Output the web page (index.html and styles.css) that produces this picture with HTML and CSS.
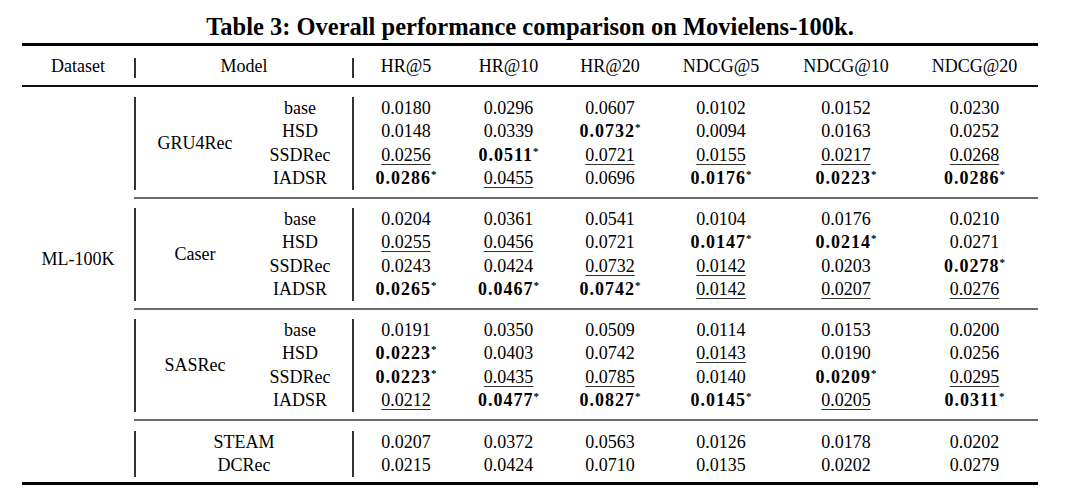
FILE: index.html
```html
<!DOCTYPE html>
<html lang="en">
<head>
<meta charset="utf-8">
<title>Table 3</title>
<link rel="stylesheet" href="styles.css">
</head>
<body>
<div class="page">
  <div class="title">Table 3: Overall performance comparison on Movielens-100k.</div>
  <div class="head">
    <div class="h">Dataset</div>
    <div class="h bar">Model</div>
    <div class="h bar">HR@5</div>
    <div class="h">HR@10</div>
    <div class="h">HR@20</div>
    <div class="h">NDCG@5</div>
    <div class="h">NDCG@10</div>
    <div class="h">NDCG@20</div>
  </div>
  <div class="body">
    <div class="dataset">ML-100K</div>

    <div class="group">
      <div class="name">GRU4Rec</div>
      <div class="var">base</div>
      <div class="c n1">0.0180</div><div class="c">0.0296</div><div class="c">0.0607</div><div class="c">0.0102</div><div class="c">0.0152</div><div class="c">0.0230</div>
      <div class="var">HSD</div>
      <div class="c n1">0.0148</div><div class="c">0.0339</div><div class="c"><b>0.0732</b><sup>*</sup></div><div class="c">0.0094</div><div class="c">0.0163</div><div class="c">0.0252</div>
      <div class="var">SSDRec</div>
      <div class="c n1"><u>0.0256</u></div><div class="c"><b>0.0511</b><sup>*</sup></div><div class="c"><u>0.0721</u></div><div class="c"><u>0.0155</u></div><div class="c"><u>0.0217</u></div><div class="c"><u>0.0268</u></div>
      <div class="var">IADSR</div>
      <div class="c n1"><b>0.0286</b><sup>*</sup></div><div class="c"><u>0.0455</u></div><div class="c">0.0696</div><div class="c"><b>0.0176</b><sup>*</sup></div><div class="c"><b>0.0223</b><sup>*</sup></div><div class="c"><b>0.0286</b><sup>*</sup></div>
    </div>

    <div class="group">
      <div class="name">Caser</div>
      <div class="var">base</div>
      <div class="c n1">0.0204</div><div class="c">0.0361</div><div class="c">0.0541</div><div class="c">0.0104</div><div class="c">0.0176</div><div class="c">0.0210</div>
      <div class="var">HSD</div>
      <div class="c n1"><u>0.0255</u></div><div class="c"><u>0.0456</u></div><div class="c">0.0721</div><div class="c"><b>0.0147</b><sup>*</sup></div><div class="c"><b>0.0214</b><sup>*</sup></div><div class="c">0.0271</div>
      <div class="var">SSDRec</div>
      <div class="c n1">0.0243</div><div class="c">0.0424</div><div class="c"><u>0.0732</u></div><div class="c"><u>0.0142</u></div><div class="c">0.0203</div><div class="c"><b>0.0278</b><sup>*</sup></div>
      <div class="var">IADSR</div>
      <div class="c n1"><b>0.0265</b><sup>*</sup></div><div class="c"><b>0.0467</b><sup>*</sup></div><div class="c"><b>0.0742</b><sup>*</sup></div><div class="c"><u>0.0142</u></div><div class="c"><u>0.0207</u></div><div class="c"><u>0.0276</u></div>
    </div>

    <div class="group">
      <div class="name">SASRec</div>
      <div class="var">base</div>
      <div class="c n1">0.0191</div><div class="c">0.0350</div><div class="c">0.0509</div><div class="c">0.0114</div><div class="c">0.0153</div><div class="c">0.0200</div>
      <div class="var">HSD</div>
      <div class="c n1"><b>0.0223</b><sup>*</sup></div><div class="c">0.0403</div><div class="c">0.0742</div><div class="c"><u>0.0143</u></div><div class="c">0.0190</div><div class="c">0.0256</div>
      <div class="var">SSDRec</div>
      <div class="c n1"><b>0.0223</b><sup>*</sup></div><div class="c"><u>0.0435</u></div><div class="c"><u>0.0785</u></div><div class="c">0.0140</div><div class="c"><b>0.0209</b><sup>*</sup></div><div class="c"><u>0.0295</u></div>
      <div class="var">IADSR</div>
      <div class="c n1"><u>0.0212</u></div><div class="c"><b>0.0477</b><sup>*</sup></div><div class="c"><b>0.0827</b><sup>*</sup></div><div class="c"><b>0.0145</b><sup>*</sup></div><div class="c"><u>0.0205</u></div><div class="c"><b>0.0311</b><sup>*</sup></div>
    </div>

    <div class="group last">
      <div class="model">STEAM</div>
      <div class="c n1">0.0207</div><div class="c">0.0372</div><div class="c">0.0563</div><div class="c">0.0126</div><div class="c">0.0178</div><div class="c">0.0202</div>
      <div class="model">DCRec</div>
      <div class="c n1">0.0215</div><div class="c">0.0424</div><div class="c">0.0710</div><div class="c">0.0135</div><div class="c">0.0202</div><div class="c">0.0279</div>
    </div>
  </div>
</div>
</body>
</html>
```

FILE: styles.css
```css
* { box-sizing: border-box; }
html, body { margin: 0; padding: 0; background: #fff; }
body {
  font-family: "Liberation Serif", "Times New Roman", serif;
  color: #000;
  font-size: 18px;
}
.page { width: 1016px; margin-left: 22px; }

.title {
  height: 43px;
  padding-top: 13px;
  font-size: 24.5px;
  line-height: 28px;
  font-weight: bold;
  text-align: center;
  white-space: nowrap;
}

.head {
  display: grid;
  grid-template-columns: 112px 218px 106px 101px 102px 120px 130px 127px;
  border-top: 3px solid #000;
  border-bottom: 2px solid #111;
  padding: 12px 0 7px;
}
.h {
  line-height: 16px;
  padding-bottom: 4px;
  text-align: center;
  white-space: nowrap;
}
.bar { border-left: 2px solid #333; }

.body {
  display: grid;
  grid-template-columns: 112px 904px;
  border-bottom: 3px solid #000;
}
.dataset {
  grid-column: 1;
  grid-row: 1 / 4;
  display: flex;
  align-items: center;
  justify-content: center;
  padding-top: 13px;
}

.group {
  grid-column: 2;
  display: grid;
  grid-template-columns: 120px 98px 106px 101px 102px 120px 130px 127px;
  grid-auto-rows: 23.333px;
  padding: 10px 0 6.667px;
}
.group + .group {
  border-top: 2px solid #6a6a6a;
  padding-top: 9px;
}
.group.last {
  grid-template-columns: 218px 106px 101px 102px 120px 130px 127px;
  padding: 9.6px 0 4.7px;
}

.name {
  grid-column: 1;
  grid-row: 1 / 5;
  display: flex;
  align-items: center;
  justify-content: center;
  border-left: 2px solid #333;
}
.var {
  line-height: 23.333px;
  text-align: center;
  padding-right: 6px;
}
.model {
  line-height: 23.333px;
  text-align: center;
  border-left: 2px solid #333;
}
.c {
  line-height: 23.333px;
  text-align: center;
  white-space: nowrap;
}
.n1 { border-left: 2px solid #333; }

b { font-weight: bold; letter-spacing: 1px; }
u {
  text-decoration: underline;
  text-decoration-thickness: 1px;
  text-underline-offset: 3px;
  text-decoration-color: #333;
}
sup {
  font-size: 11px;
  line-height: 0;
  vertical-align: 6px;
  font-weight: bold;
}
```
